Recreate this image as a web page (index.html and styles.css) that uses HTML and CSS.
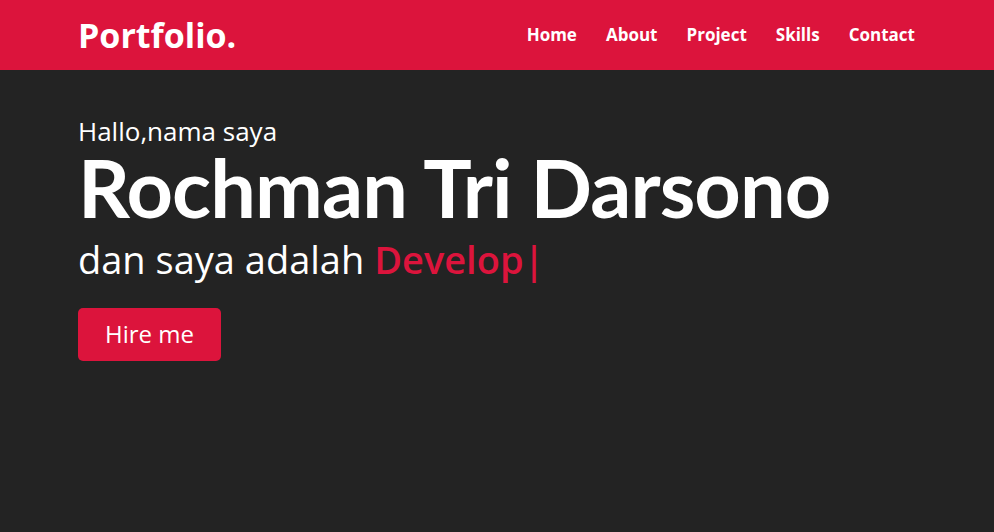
FILE: index.html
```html
<!DOCTYPE html>
<html lang="id">
<head>
<meta charset="utf-8">
<title>Portfolio</title>
<link rel="stylesheet" href="styles.css">
</head>
<body>
<header class="navbar">
  <a class="logo" href="#">Portfolio.</a>
  <ul class="menu">
    <li><a href="#">Home</a></li>
    <li><a href="#">About</a></li>
    <li><a href="#">Project</a></li>
    <li><a href="#">Skills</a></li>
    <li><a href="#">Contact</a></li>
  </ul>
</header>
<section class="hero">
  <div class="text-1">Hallo,nama saya</div>
  <div class="text-2">Rochman Tri Darsono</div>
  <div class="text-3">dan saya adalah <span class="typing">Develop|</span></div>
  <a class="hire" href="#">Hire me</a>
</section>
</body>
</html>
```
FILE: styles.css
```css
* { box-sizing: border-box; }
html, body { margin: 0; padding: 0; }
body {
  background: #232323;
  color: #fff;
  font-family: "Open Sans", "Noto Sans", sans-serif;
  height: 532px;
  overflow: hidden;
}
a { color: #fff; text-decoration: none; }
.navbar {
  height: 70px;
  background: #dc143c;
  padding: 0 79px 0 78px;
  display: flex;
  align-items: center;
  justify-content: space-between;
}
.logo {
  font-size: 34px;
  font-weight: 700;
  line-height: 1;
}
.menu {
  list-style: none;
  margin: 0;
  padding: 0;
  display: flex;
  gap: 29px;
}
.menu a {
  font-size: 17px;
  font-weight: 700;
  line-height: 1;
}
.hero {
  padding: 48px 78px 0;
  display: flex;
  flex-direction: column;
  align-items: flex-start;
}
.text-1 {
  font-size: 26px;
  line-height: 1;
}
.text-2 {
  font-family: "Lato", "Open Sans", sans-serif;
  font-size: 81px;
  font-weight: 700;
  line-height: 1;
  letter-spacing: -0.9px;
  margin-top: 2px;
  white-space: nowrap;
}
.text-3 {
  font-size: 38px;
  line-height: 1;
  margin-top: 13px;
  white-space: nowrap;
}
.typing {
  color: #dc143c;
  font-weight: 600;
}
.hire {
  margin-top: 30px;
  background: #dc143c;
  color: #fff;
  font-size: 24px;
  line-height: 1;
  padding: 14px 27px 15px;
  border-radius: 5px;
}
```
